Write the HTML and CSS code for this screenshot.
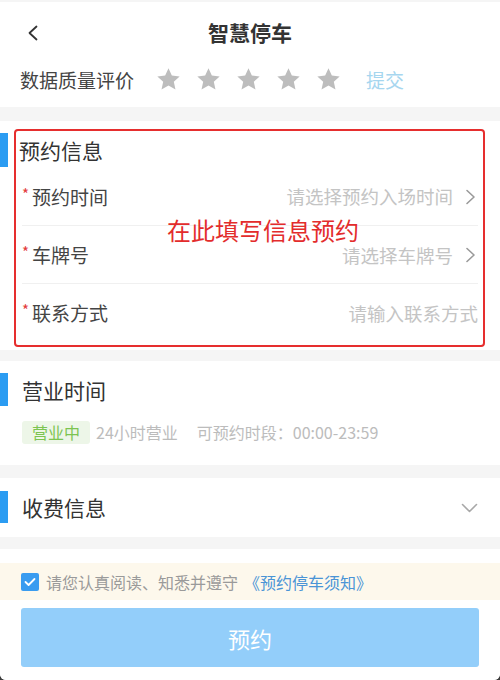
FILE: index.html
```html
<!DOCTYPE html>
<html lang="zh-CN">
<head>
<meta charset="utf-8">
<title>智慧停车</title>
<link rel="stylesheet" href="styles.css">
</head>
<body>
<div class="app">
  <header class="header">
    <svg class="back" width="12" height="16" viewBox="0 0 12 16"><path d="M9.5 1.5 L2.5 8 L9.5 14.5" fill="none" stroke="#333" stroke-width="1.8" stroke-linecap="round" stroke-linejoin="round"/></svg>
    <h1 class="title">智慧停车</h1>
  </header>
  <div class="rating">
    <span class="rating-label">数据质量评价</span>
    <div class="stars">
      <svg class="star" viewBox="0 0 24 24"><path d="M12 1.2l3.2 7 7.5.8-5.6 5.1 1.6 7.5L12 17.8l-6.7 3.8 1.6-7.5-5.6-5.1 7.5-.8z"/></svg>
      <svg class="star" viewBox="0 0 24 24"><path d="M12 1.2l3.2 7 7.5.8-5.6 5.1 1.6 7.5L12 17.8l-6.7 3.8 1.6-7.5-5.6-5.1 7.5-.8z"/></svg>
      <svg class="star" viewBox="0 0 24 24"><path d="M12 1.2l3.2 7 7.5.8-5.6 5.1 1.6 7.5L12 17.8l-6.7 3.8 1.6-7.5-5.6-5.1 7.5-.8z"/></svg>
      <svg class="star" viewBox="0 0 24 24"><path d="M12 1.2l3.2 7 7.5.8-5.6 5.1 1.6 7.5L12 17.8l-6.7 3.8 1.6-7.5-5.6-5.1 7.5-.8z"/></svg>
      <svg class="star" viewBox="0 0 24 24"><path d="M12 1.2l3.2 7 7.5.8-5.6 5.1 1.6 7.5L12 17.8l-6.7 3.8 1.6-7.5-5.6-5.1 7.5-.8z"/></svg>
    </div>
    <span class="submit">提交</span>
  </div>

  <section class="card card-booking">
    <div class="sec-title sec-title-booking">预约信息</div>
    <div class="row">
      <span class="label"><i class="req">*</i>预约时间</span>
      <span class="value">请选择预约入场时间<svg class="arrow" width="14" height="16" viewBox="0 0 14 16"><path d="M3 1.5 L10 8 L3 14.5" fill="none" stroke="#9a9a9a" stroke-width="1.6" stroke-linecap="round" stroke-linejoin="round"/></svg></span>
    </div>
    <div class="row">
      <span class="label"><i class="req">*</i>车牌号</span>
      <span class="value">请选择车牌号<svg class="arrow" width="14" height="16" viewBox="0 0 14 16"><path d="M3 1.5 L10 8 L3 14.5" fill="none" stroke="#9a9a9a" stroke-width="1.6" stroke-linecap="round" stroke-linejoin="round"/></svg></span>
    </div>
    <div class="row">
      <span class="label"><i class="req">*</i>联系方式</span>
      <span class="value">请输入联系方式</span>
    </div>
    <div class="mark-box"></div>
    <div class="mark-text">在此填写信息预约</div>
  </section>

  <section class="card card-hours">
    <div class="sec-title">营业时间</div>
    <div class="hours">
      <span class="tag">营业中</span>
      <span class="hours-text">24小时营业</span>
      <span class="hours-text hours-range">可预约时段：00:00-23:59</span>
    </div>
  </section>

  <section class="card card-fee">
    <div class="sec-title sec-title-fee">
      <span>收费信息</span>
      <svg class="down" width="17" height="10" viewBox="0 0 17 10"><path d="M1.5 1.5 L8.5 8.5 L15.5 1.5" fill="none" stroke="#a8a8a8" stroke-width="1.6" stroke-linecap="round" stroke-linejoin="round"/></svg>
    </div>
  </section>

  <footer class="footer">
    <div class="notice">
      <span class="check"><svg width="12" height="10" viewBox="0 0 12 10"><path d="M1.5 5 L4.6 8 L10.5 2" fill="none" stroke="#fff" stroke-width="1.8" stroke-linecap="round" stroke-linejoin="round"/></svg></span>
      <span class="notice-text">请您认真阅读、知悉并遵守</span>
      <span class="notice-link">《预约停车须知》</span>
    </div>
    <button class="btn">预约</button>
  </footer>
</div>
</body>
</html>
```
FILE: styles.css
```css
* { box-sizing: border-box; }
html, body { margin: 0; padding: 0; }
body {
  width: 500px;
  height: 680px;
  background: #3c3c3c;
  font-family: "Noto Sans CJK SC", "Noto Sans", sans-serif;
  color: #333;
  overflow: hidden;
}
.app {
  width: 500px;
  height: 680px;
  background: #f5f5f5;
  padding-top: 2px;
  border-radius: 0 0 6px 6px;
  overflow: hidden;
  display: flex;
  flex-direction: column;
}
.header {
  background: #fff;
  height: 62px;
  display: flex;
  align-items: center;
  justify-content: center;
  position: relative;
}
.back {
  position: absolute;
  left: 27px;
  top: 23px;
}
.title {
  margin: 0;
  font-size: 21px;
  font-weight: 700;
  color: #333;
  line-height: 30px;
  margin-top: -2px;
}
.rating {
  background: #fff;
  height: 43px;
  padding: 0 0 12px 20px;
  display: flex;
  align-items: center;
}
.rating-label {
  font-size: 19px;
  color: #444;
  line-height: 28px;
}
.stars {
  display: flex;
  gap: 15px;
  margin-left: 22px;
}
.star {
  width: 25px;
  height: 25px;
  fill: #bdbdbd;
  display: block;
}
.submit {
  margin-left: 25px;
  font-size: 19px;
  color: #a6d6ef;
  line-height: 28px;
}
.card {
  background: #fff;
  position: relative;
}
.card-booking {
  margin-top: 14px;
  height: 229px;
  padding-top: 12px;
}
.sec-title {
  position: relative;
  height: 34px;
  display: flex;
  align-items: center;
  padding-left: 22px;
  font-size: 21px;
  color: #333;
}
.sec-title::before {
  content: "";
  position: absolute;
  left: 0;
  top: 0;
  bottom: 0;
  width: 8px;
  background: #2b9cf2;
}
.sec-title-booking { padding-left: 19px; }
.row {
  height: 58px;
  margin: 0 22px;
  display: flex;
  align-items: center;
  justify-content: space-between;
}
.row + .row { border-top: 1px solid #f0f0f0; }
.label {
  font-size: 19px;
  color: #444;
  display: flex;
  align-items: center;
}
.req {
  font-style: normal;
  color: #e33a3a;
  font-size: 15px;
  margin-right: 3px;
  position: relative;
  top: -3px;
}
.value {
  font-size: 18.5px;
  color: #c4c4c4;
  display: flex;
  align-items: center;
}
.arrow {
  margin-left: 11px;
  margin-top: 1px;
}
.mark-box {
  position: absolute;
  left: 14px;
  top: 8px;
  width: 471px;
  height: 218px;
  border: 2.5px solid #e62e2e;
  border-radius: 4px;
  pointer-events: none;
}
.mark-text {
  position: absolute;
  left: 167px;
  top: 95px;
  font-size: 24px;
  line-height: 28px;
  color: #e32c2c;
}
.card-hours {
  margin-top: 11px;
  height: 104px;
  padding-top: 12px;
}
.card-hours .sec-title { height: 33px; }
.hours {
  margin-top: 14px;
  padding-left: 22px;
  display: flex;
  align-items: center;
}
.tag {
  height: 23px;
  padding: 0 10px;
  border-radius: 3px;
  background: #edf6e8;
  color: #7cc451;
  font-size: 16px;
  line-height: 23px;
}
.hours-text {
  font-size: 16px;
  color: #bcbcbc;
  margin-left: 6px;
}
.hours-range { margin-left: 19px; }
.card-fee {
  margin-top: 13px;
  height: 59px;
  padding-top: 13px;
}
.sec-title-fee {
  height: 32px;
  justify-content: space-between;
  padding-right: 22px;
}
.down { display: block; margin-top: 1px; }
.footer {
  margin-top: 12px;
  background: #fff;
  flex: 1;
  padding-top: 14px;
}
.notice {
  height: 37px;
  background: #fdf8ec;
  display: flex;
  align-items: center;
  padding-left: 21px;
}
.check {
  width: 18px;
  height: 18px;
  border-radius: 2px;
  background: #3a9cf0;
  display: flex;
  align-items: center;
  justify-content: center;
}
.notice-text {
  margin-left: 7px;
  font-size: 16px;
  color: #9a9a9a;
}
.notice-link {
  margin-left: 6px;
  font-size: 16px;
  color: #4a94d6;
}
.btn {
  display: block;
  margin: 8px 21px 0;
  width: 458px;
  height: 59px;
  border: none;
  border-radius: 3px;
  background: #93cefa;
  color: #fff;
  font-family: "Noto Sans CJK SC", "Noto Sans", sans-serif;
  font-size: 22px;
  padding: 0;
}
```
